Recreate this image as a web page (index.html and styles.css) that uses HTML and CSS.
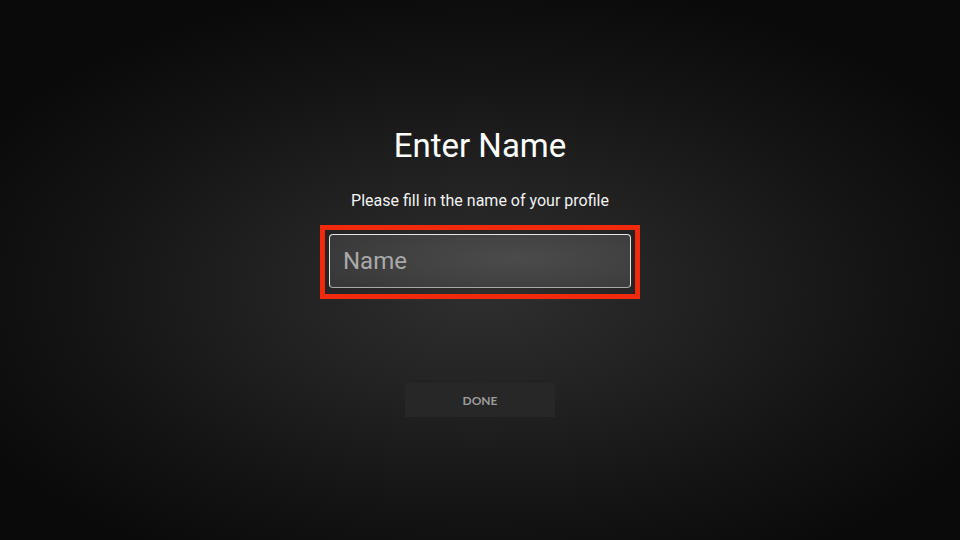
FILE: index.html
```html
<!DOCTYPE html>
<html lang="en">
<head>
<meta charset="utf-8">
<title>Enter Name</title>
<link rel="stylesheet" href="styles.css">
</head>
<body>
<main class="screen">
  <h1 class="title">Enter Name</h1>
  <p class="subtitle">Please fill in the name of your profile</p>
  <div class="focus-ring">
    <div class="name-input">Name</div>
  </div>
  <button class="done-btn">DONE</button>
</main>
</body>
</html>
```

FILE: styles.css
```css
html, body {
  margin: 0;
  padding: 0;
}

body {
  width: 960px;
  height: 540px;
  overflow: hidden;
  background: #0b0b0b;
}

.screen {
  width: 960px;
  height: 540px;
  box-sizing: border-box;
  padding-top: 127px;
  display: flex;
  flex-direction: column;
  align-items: center;
  font-family: Roboto, "Noto Sans", sans-serif;
  background: radial-gradient(ellipse 60% 58% at 50% 54%, #2f2f2f 0%, #222222 35%, #141414 70%, #0a0a0a 100%);
}

.title {
  margin: 0;
  font-size: 33px;
  line-height: 38px;
  font-weight: 400;
  color: #ffffff;
}

.subtitle {
  margin: 26px 0 0;
  font-size: 16px;
  line-height: 20px;
  color: #f2f2f2;
}

.focus-ring {
  margin-top: 14px;
  width: 320px;
  height: 74px;
  box-sizing: border-box;
  border: 5px solid #f22a0c;
  padding: 4px 4px 6px;
}

.name-input {
  height: 100%;
  box-sizing: border-box;
  border: 1.5px solid #e6e6e6;
  border-bottom-color: #a8a8a8;
  border-radius: 4px;
  background: radial-gradient(ellipse 70% 90% at 62% 45%, #4b4b4b 0%, #424242 50%, #383838 100%);
  padding-left: 13px;
  display: flex;
  align-items: center;
  font-size: 24px;
  color: #a9a9a9;
}

.done-btn {
  margin-top: 84px;
  width: 150px;
  height: 34px;
  border: none;
  background: #272727;
  color: #9c9c9c;
  font-family: Lato, Roboto, sans-serif;
  font-weight: 700;
  font-size: 12px;
  padding: 0;
}
```
